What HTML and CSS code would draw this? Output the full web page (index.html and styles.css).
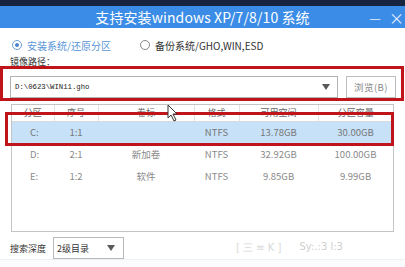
FILE: index.html
```html
<!DOCTYPE html>
<html lang="zh">
<head>
<meta charset="utf-8">
<link rel="stylesheet" href="styles.css">
</head>
<body>
<div class="win">
  <div class="topbar"></div>
  <div class="titlebar">
    <span class="title">支持安装windows XP/7/8/10 系统</span>
    <span class="ctrls"><span class="min">—</span><span class="close">×</span></span>
  </div>
  <div class="content">
    <div class="radios">
      <label class="radio on"><span class="circle"><span class="dot"></span></span>安装系统/还原分区</label>
      <label class="radio"><span class="circle"></span>备份系统/GHO,WIN,ESD</label>
    </div>
    <div class="label">镜像路径：</div>
    <div class="pathrow">
      <div class="input"><span class="path">D:\0623\WIN11.gho</span><span class="tri"></span></div>
      <div class="btn">浏览(B)</div>
    </div>
    <div class="tablebox">
      <table class="grid">
        <colgroup><col class="c1"><col class="c2"><col class="c3"><col class="c4"><col class="c5"><col class="c6"></colgroup>
        <thead><tr><th>分区</th><th>序号</th><th>卷标</th><th>格式</th><th>可用空间</th><th>分区容量</th></tr></thead>
        <tbody>
          <tr class="sel"><td>C:</td><td>1:1</td><td></td><td>NTFS</td><td>13.78GB</td><td>30.00GB</td></tr>
          <tr><td>D:</td><td>2:1</td><td>新加卷</td><td>NTFS</td><td>32.92GB</td><td>100.00GB</td></tr>
          <tr><td>E:</td><td>1:2</td><td>软件</td><td>NTFS</td><td>9.85GB</td><td>9.99GB</td></tr>
        </tbody>
      </table>
    </div>
    <div class="searchrow">
      <span class="slabel">搜索深度</span>
      <div class="select"><span>2级目录</span><span class="tri"></span></div>
      <div class="wm"><span class="wm1">[ 三 ≡ K ]</span><span class="wm2">Sy:.:3 l:3</span></div>
    </div>
  </div>
  <div class="bottom"></div>
  <div class="redbox rb1"></div>
  <div class="redbox rb2"></div>
  <svg class="cursor" width="12" height="18" viewBox="0 0 12 18"><path d="M1 1 L1 14 L4 11 L7 17 L9 16 L6 10 L10 10 Z" fill="#fff" stroke="#333" stroke-width="1"/></svg>
</div>
</body>
</html>
```
FILE: styles.css
```css
* { box-sizing: border-box; }
html, body { margin: 0; padding: 0; background: #fff; }
body { width: 405px; height: 267px; overflow: hidden; font-family: "Noto Sans CJK SC", "Noto Sans", sans-serif; }
.win { position: relative; width: 405px; height: 267px; background: #fff; }
.topbar { height: 6px; background: #16243f; }
.titlebar { height: 22px; background: #3a8ce6; display: flex; align-items: center; justify-content: center; position: relative; color: #fff; }
.title { font-size: 14px; line-height: 22px; letter-spacing: 0.1px; }
.ctrls { position: absolute; right: 1px; top: 0; height: 22px; display: flex; align-items: center; gap: 8px; font-size: 13px; color: #e6f0ff; }
.close { font-size: 15px; }
.content { padding-left: 10px; }
.radios { display: flex; align-items: center; height: 16px; margin-top: 9px; font-size: 10px; }
.radio { display: flex; align-items: center; color: #333; }
.radio.on { color: #5a96d6; width: 128px; }
.circle { width: 10px; height: 10px; border: 1px solid #888; border-radius: 50%; margin-right: 5px; display: flex; align-items: center; justify-content: center; margin-left: 2px; }
.radio.on .circle { border-color: #6d9fd6; }
.dot { width: 4px; height: 4px; border-radius: 50%; background: #4a86cc; }
.label { font-size: 9px; line-height: 10px; height: 10px; margin-top: 4px; color: #333; }
.pathrow { display: flex; margin-top: 9px; height: 22px; }
.input { width: 328px; height: 22px; border: 1px solid #b3b3b3; display: flex; align-items: center; justify-content: space-between; padding: 0 7px 0 4px; }
.path { font-family: "Liberation Mono", monospace; font-size: 7.3px; color: #222; }
.tri { width: 0; height: 0; border-left: 4.5px solid transparent; border-right: 4.5px solid transparent; border-top: 6px solid #5a5a5a; }
.btn { margin-left: 8px; width: 50px; height: 22px; border: 1px solid #bdbdbd; display: flex; align-items: center; justify-content: center; font-size: 9.5px; color: #888; letter-spacing: 0.5px; }
.tablebox { margin-top: 6px; margin-left: 1px; width: 383px; height: 128px; border: 1px solid #c4c4c4; }
.grid { width: 381px; border-collapse: collapse; table-layout: fixed; }
.c1 { width: 42px; } .c2 { width: 44px; } .c3 { width: 96px; } .c4 { width: 45px; } .c5 { width: 79px; } .c6 { width: 75px; }
.grid th { height: 16px; font-weight: normal; font-size: 9px; color: #666; border-right: 1px solid #e3e3e3; border-bottom: 1px solid #d8d8d8; padding: 0; text-align: center; }
.grid th:last-child { border-right: none; }
.grid td { height: 22px; font-size: 9.5px; color: #8a8a8a; text-align: center; padding: 0; }
.grid tr.sel td { background: #c6e1f8; color: #777; }
.grid td:nth-child(1) { text-align: left; padding-left: 18px; }
.searchrow { display: flex; align-items: center; margin-top: 5px; height: 22px; }
.slabel { font-size: 9px; color: #333; width: 43px; }
.select { width: 71px; height: 22px; border: 1px solid #b8b8b8; display: flex; align-items: center; justify-content: space-between; padding: 0 8px 0 3px; font-size: 9px; color: #333; }
.wm { margin-left: 112px; display: flex; gap: 18px; color: #d9d9d9; font-size: 10px; font-family: "DejaVu Sans", sans-serif; }
.wm2 { color: #cfcfcf; }
.bottom { height: 8px; margin-top: 0; border-top: 1px solid #eef0f3; background: #fafbfc; }
.redbox { position: absolute; border: 3px solid #c0141b; }
.rb1 { left: 0; top: 66px; width: 404px; height: 35px; }
.rb2 { left: 5px; top: 112px; width: 389px; height: 34px; }
.cursor { position: absolute; left: 167px; top: 104px; }
```
